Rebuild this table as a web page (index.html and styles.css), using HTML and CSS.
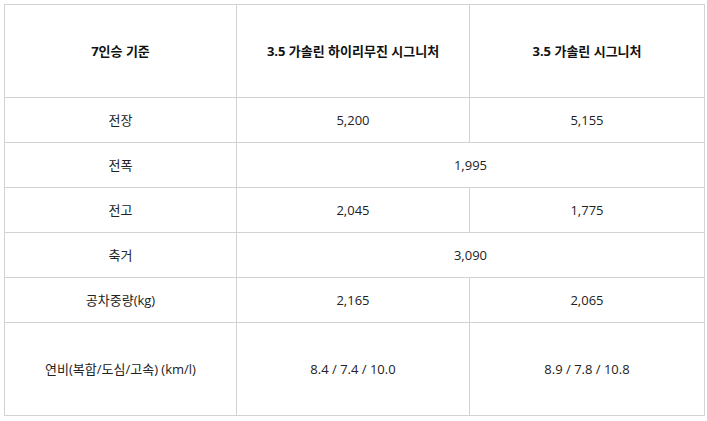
FILE: index.html
```html
<!DOCTYPE html>
<html lang="ko">
<head>
<meta charset="utf-8">
<link rel="stylesheet" href="styles.css">
</head>
<body>
<table class="spec">
  <colgroup><col class="c1"><col class="c2"><col class="c3"></colgroup>
  <tr class="tall head"><th>7인승 기준</th><th>3.5 가솔린 하이리무진 시그니처</th><th>3.5 가솔린 시그니처</th></tr>
  <tr><td>전장</td><td>5,200</td><td>5,155</td></tr>
  <tr><td>전폭</td><td colspan="2">1,995</td></tr>
  <tr><td>전고</td><td>2,045</td><td>1,775</td></tr>
  <tr><td>축거</td><td colspan="2">3,090</td></tr>
  <tr><td>공차중량(kg)</td><td>2,165</td><td>2,065</td></tr>
  <tr class="tall"><td>연비(복합/도심/고속) (km/l)</td><td>8.4 / 7.4 / 10.0</td><td>8.9 / 7.8 / 10.8</td></tr>
</table>
</body>
</html>
```
FILE: styles.css
```css
html, body { margin: 0; padding: 0; background: #fff; }
body { padding: 4px; }
.spec {
  border-collapse: collapse;
  width: 700px;
  table-layout: fixed;
  font-family: "Open Sans", "Noto Sans CJK KR", sans-serif;
  font-size: 13px;
  color: #222;
}
.c1 { width: 232px; }
.c2 { width: 233px; }
.c3 { width: 235px; }
.spec th, .spec td {
  border: 1px solid #d3d3d3;
  text-align: center;
  vertical-align: middle;
  padding: 0;
  height: 44px;
  line-height: 18px;
}
.spec tr.tall th, .spec tr.tall td { height: 92px; }
.spec th { font-weight: 700; color: #111; }
```
